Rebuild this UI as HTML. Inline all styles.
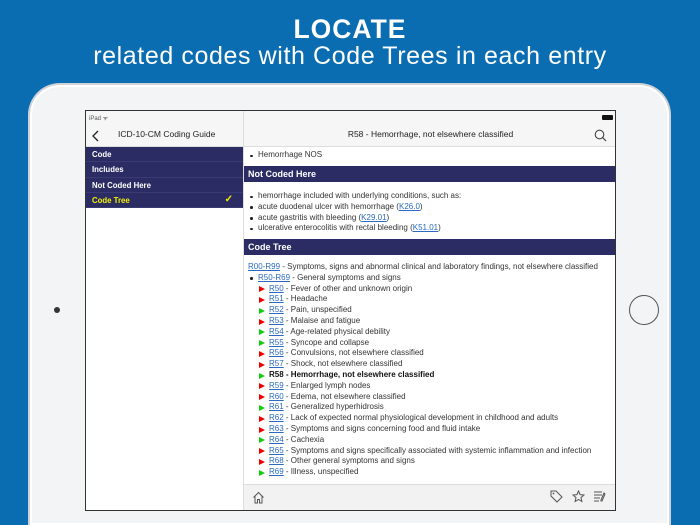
<!DOCTYPE html>
<html><head><meta charset="utf-8"><style>
*{margin:0;padding:0;box-sizing:border-box}
html{width:700px;height:525px;overflow:hidden}
body{width:700px;height:525px;overflow:hidden;background:#0b6db1;font-family:"Liberation Sans",sans-serif;position:relative}
.t1{position:absolute;top:14px;width:700px;text-align:center;color:#fff;font-weight:bold;font-size:26.5px;letter-spacing:1px}
.t2{position:absolute;top:42px;width:700px;text-align:center;color:#fff;font-size:25px;letter-spacing:.6px}
.ipad{position:absolute;left:28px;top:83px;width:643px;height:442px;background:#f3f4f6;border-radius:32px 32px 0 0;border:2px solid #cfd3d8;border-bottom:none;box-shadow:inset 0 0 0 2px #fff}
.cam{position:absolute;left:54px;top:307px;width:6px;height:6px;border-radius:50%;background:#333}
.home{position:absolute;left:629px;top:295px;width:30px;height:30px;border-radius:50%;border:1.5px solid #555}
.scr{position:absolute;left:85px;top:110px;width:531px;height:401px;border:1.5px solid #333;background:#fff;overflow:hidden;font-size:8px;color:#333}
.side{position:absolute;left:0;top:0;width:158px;height:400px;border-right:1px solid #ddd}
.status{position:absolute;top:0;left:0;width:531px;height:14px;font-size:6px;color:#555;padding:3px 0 0 3px;background:#f6f6f6}
.bat{position:absolute;right:4px;top:4px;width:11px;height:5px;background:#111;border-radius:1px}
.nav{position:absolute;top:14px;left:0;width:531px;height:22px;background:#f6f6f6;border-bottom:1px solid #ddd}
.nav .l{position:absolute;left:32px;top:4px;font-size:8.5px;color:#222}
.nav .c{position:absolute;left:158px;width:373px;top:4px;text-align:center;font-size:8.5px;color:#222}
.divv{position:absolute;left:157px;top:0;width:1px;height:36px;background:#ddd}
.menu{position:absolute;top:36px;left:0;width:157px;background:#2b2c63}
.menu div{height:15.3px;color:#fff;font-weight:bold;font-size:7.8px;padding:3px 0 0 6px;border-bottom:1px solid #3a3b72;position:relative}
.menu .y{color:#f2f200}
.main{position:absolute;left:158px;top:36px;width:373px}
.hd{background:#2b2c63;color:#fff;font-weight:bold;font-size:9px;padding:3px 4px;height:16px}
ul{list-style:none}
.b li{padding-left:12px;position:relative;height:10.8px;line-height:10.8px}
.b li:before{content:"";position:absolute;left:4px;top:4.5px;width:2.5px;height:2.5px;border-radius:50%;background:#222}
a{color:#2a6ac0;text-decoration:underline}
.tr{position:absolute;left:25px;line-height:10.8px;height:10.8px;white-space:nowrap}
.tr:before{content:"";position:absolute;left:-10px;top:2.5px;border-left:6px solid #e00;border-top:3px solid transparent;border-bottom:3px solid transparent}
.tr.g:before{border-left-color:#1c1}
.foot{position:absolute;left:158px;top:373px;width:373px;height:27px;background:#f2f2f2;border-top:1px solid #ddd}
</style></head><body>
<div class="t1">LOCATE</div>
<div class="t2">related codes with Code Trees in each entry</div>
<div class="ipad"></div>
<div class="cam"></div><div class="home"></div>
<div class="scr">
<div class="status">iPad ᯤ<div class="bat"></div></div>
<div class="nav"><svg style="position:absolute;left:6px;top:5px" width="8" height="12"><path d="M6 1L1 6l5 5" stroke="#222" stroke-width="1.3" fill="none"/></svg><span class="l">ICD-10-CM Coding Guide</span><span class="c">R58 - Hemorrhage, not elsewhere classified</span>
<svg style="position:absolute;right:10px;top:4px" width="13" height="13"><circle cx="5.5" cy="5.5" r="4.3" stroke="#444" stroke-width="1.1" fill="none"/><path d="M8.6 8.6L12 12" stroke="#444" stroke-width="1.2"/></svg></div>
<div class="divv"></div>
<div class="side"></div>
<div class="menu"><div>Code</div><div>Includes</div><div>Not Coded Here</div><div class="y">Code Tree<span style="position:absolute;right:10px;top:1px;font-size:10px">✓</span></div></div>
<div class="main">
<ul class="b" style="padding:3px 0 4px 2px;height:19px"><li>Hemorrhage NOS</li></ul>
<div class="hd">Not Coded Here</div>
<ul class="b" style="padding:9px 0 0 2px;height:57px"><li>hemorrhage included with underlying conditions, such as:</li><li>acute duodenal ulcer with hemorrhage (<a>K26.0</a>)</li><li>acute gastritis with bleeding (<a>K29.01</a>)</li><li>ulcerative enterocolitis with rectal bleeding (<a>K51.01</a>)</li></ul>
<div class="hd">Code Tree</div>
<div style="position:relative;height:230px;top:1px">
<div style="position:absolute;left:4px;top:6px;line-height:10.8px"><a>R00-R99</a> - Symptoms, signs and abnormal clinical and laboratory findings, not elsewhere classified</div>
<ul class="b" style="position:absolute;left:2px;top:16.8px"><li><a>R50-R69</a> - General symptoms and signs</li></ul>
<div class="tr" style="top:27.6px"><a>R50</a> - Fever of other and unknown origin</div>
<div class="tr" style="top:38.4px"><a>R51</a> - Headache</div>
<div class="tr g" style="top:49.2px"><a>R52</a> - Pain, unspecified</div>
<div class="tr" style="top:60px"><a>R53</a> - Malaise and fatigue</div>
<div class="tr g" style="top:70.8px"><a>R54</a> - Age-related physical debility</div>
<div class="tr g" style="top:81.6px"><a>R55</a> - Syncope and collapse</div>
<div class="tr" style="top:92.4px"><a>R56</a> - Convulsions, not elsewhere classified</div>
<div class="tr" style="top:103.2px"><a>R57</a> - Shock, not elsewhere classified</div>
<div class="tr g" style="top:114px;font-weight:bold;color:#111">R58 - Hemorrhage, not elsewhere classified</div>
<div class="tr" style="top:124.8px"><a>R59</a> - Enlarged lymph nodes</div>
<div class="tr" style="top:135.6px"><a>R60</a> - Edema, not elsewhere classified</div>
<div class="tr g" style="top:146.4px"><a>R61</a> - Generalized hyperhidrosis</div>
<div class="tr" style="top:157.2px"><a>R62</a> - Lack of expected normal physiological development in childhood and adults</div>
<div class="tr" style="top:168px"><a>R63</a> - Symptoms and signs concerning food and fluid intake</div>
<div class="tr g" style="top:178.8px"><a>R64</a> - Cachexia</div>
<div class="tr" style="top:189.6px"><a>R65</a> - Symptoms and signs specifically associated with systemic inflammation and infection</div>
<div class="tr" style="top:200.4px"><a>R68</a> - Other general symptoms and signs</div>
<div class="tr g" style="top:211.2px"><a>R69</a> - Illness, unspecified</div>
</div></div>
<div class="foot">
<svg style="position:absolute;left:8px;top:6px" width="13" height="13"><path d="M1.5 6.5L6.5 1.5l5 5M3 5v7h2.5V8.5h2V12H10V5" stroke="#555" stroke-width="1" fill="none"/></svg>
<svg style="position:absolute;right:54px;top:5px" width="13" height="13"><path d="M1 1h5l6 6-5 5-6-6z" stroke="#555" stroke-width="1" fill="none"/><circle cx="3.5" cy="3.5" r=".9" fill="#555"/></svg>
<svg style="position:absolute;right:32px;top:5px" width="13" height="13"><path d="M6.5 1l1.6 3.6 3.9.4-3 2.6.9 3.9-3.4-2-3.4 2 .9-3.9-3-2.6 3.9-.4z" stroke="#555" stroke-width="1" fill="none"/></svg>
<svg style="position:absolute;right:11px;top:5px" width="13" height="13"><path d="M1 2h8M1 5h8M1 8h6M1 11h5M11 3l1 1-3 7-1 0 0-1z" stroke="#555" stroke-width="1" fill="none"/></svg>
</div>
</div>
</body></html>
